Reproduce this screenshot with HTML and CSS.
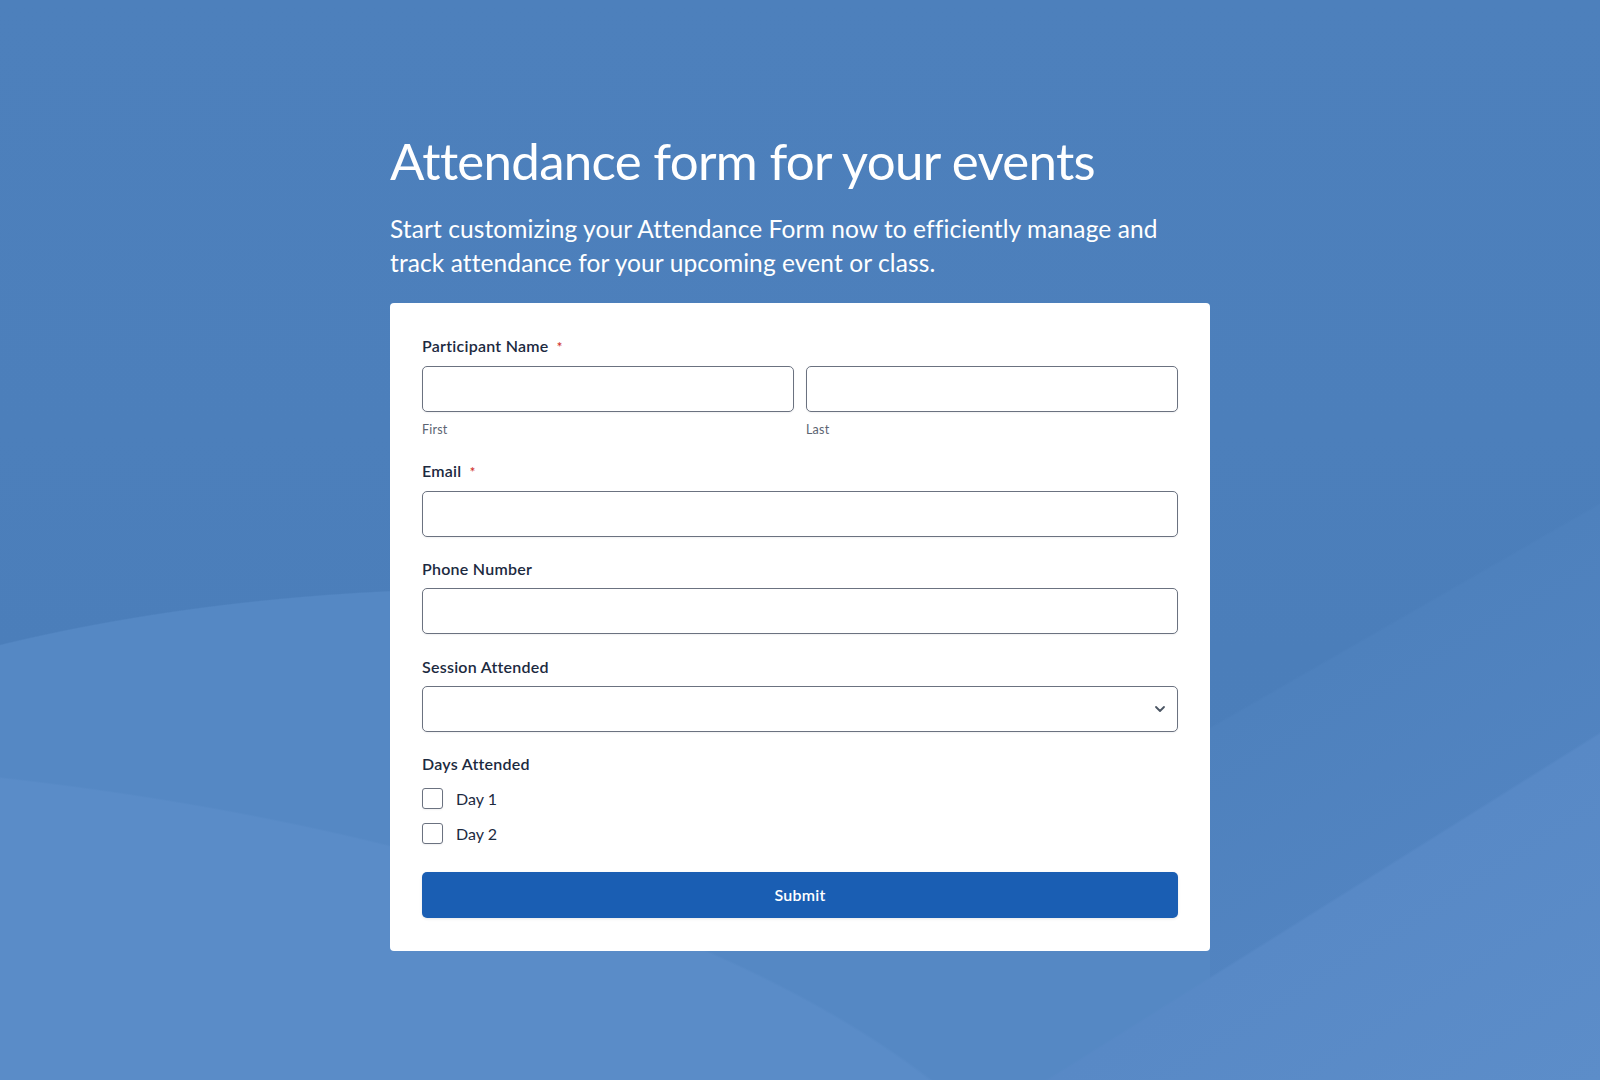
FILE: index.html
```html
<!DOCTYPE html>
<html lang="en">
<head>
<meta charset="utf-8">
<title>Attendance form for your events</title>
<link rel="stylesheet" href="styles.css">
</head>
<body>
<main class="page">
  <header class="intro">
    <h1 class="title">Attendance form for your events</h1>
    <p class="subtitle">Start customizing your Attendance Form now to efficiently manage and track attendance for your upcoming event or class.</p>
  </header>
  <section class="card">
    <form class="form">
      <div class="field">
        <label class="label">Participant Name <span class="req">*</span></label>
        <div class="name-row">
          <div class="sub">
            <input class="input" type="text">
            <span class="hint">First</span>
          </div>
          <div class="sub">
            <input class="input" type="text">
            <span class="hint">Last</span>
          </div>
        </div>
      </div>
      <div class="field">
        <label class="label">Email <span class="req">*</span></label>
        <input class="input" type="email">
      </div>
      <div class="field">
        <label class="label">Phone Number</label>
        <input class="input" type="tel">
      </div>
      <div class="field">
        <label class="label">Session Attended</label>
        <div class="select-wrap">
          <select class="input select"><option></option></select>
          <svg class="chevron" width="12" height="8" viewBox="0 0 12 8"><path d="M2 2l4 4 4-4" fill="none" stroke="#4b5563" stroke-width="1.8" stroke-linecap="round" stroke-linejoin="round"/></svg>
        </div>
      </div>
      <div class="field">
        <span class="label days">Days Attended</span>
        <div class="options">
          <label class="option"><input class="check" type="checkbox"><span>Day 1</span></label>
          <label class="option"><input class="check" type="checkbox"><span>Day 2</span></label>
        </div>
      </div>
      <button class="submit" type="button">Submit</button>
    </form>
  </section>
</main>
</body>
</html>
```

FILE: styles.css
```css
html, body {
  margin: 0;
  padding: 0;
}
body {
  min-height: 1080px;
  font-family: Lato, "Noto Sans", sans-serif;
  background-color: #4c7fbb;
  background-image:
    linear-gradient(147.9deg, rgba(88,137,198,0) 83.2%, #5889c6 83.35%, #5c8dc9 100%),
    radial-gradient(ellipse 1500px 600px at -400px 1355px, #5a8cc8 99.7%, rgba(90,140,200,0) 100%),
    radial-gradient(ellipse 1000px 420px at 500px 1008px, #5588c4 99.7%, rgba(85,136,196,0) 100%),
    linear-gradient(150.1deg, rgba(78,129,190,0) 71.05%, #4e81bd 71.2%, #5284c1 85%),
    linear-gradient(180deg, #4d80bc 0%, #4c7fbb 40%, #4b7eba 60%, #4c7fbb 100%);
  background-size: 100% 100%, 1210px 1080px, 1210px 1080px, 100% 100%, 100% 100%;
  background-position: 0 0;
  background-repeat: no-repeat;
}
.page {
  width: 820px;
  margin: 0 auto;
  padding: 129px 0 131px;
  box-sizing: border-box;
}
.intro {
  color: #ffffff;
}
.title {
  margin: 0;
  font-size: 51px;
  line-height: 64px;
  font-weight: 400;
  letter-spacing: -0.7px;
}
.subtitle {
  max-width: 790px;
  margin: 19px 0 0;
  font-size: 24.5px;
  line-height: 34px;
  font-weight: 400;
  letter-spacing: 0.1px;
}
.card {
  margin-top: 23px;
  background: #ffffff;
  border-radius: 4px;
  padding: 33px 32px 33px;
}
.form {
  display: flex;
  flex-direction: column;
  gap: 22.5px;
}
.field {
  display: flex;
  flex-direction: column;
}
.label {
  font-size: 16px;
  line-height: 20px;
  font-weight: 600;
  letter-spacing: 0.25px;
  color: #1c2a3f;
  margin-bottom: 9px;
}
.req {
  color: #d0342c;
  font-size: 13px;
  margin-left: 4px;
  vertical-align: 0;
}
.name-row {
  display: grid;
  grid-template-columns: 1fr 1fr;
  gap: 12px;
}
.sub {
  display: flex;
  flex-direction: column;
}
.hint {
  margin-top: 10px;
  font-size: 12.5px;
  line-height: 16px;
  letter-spacing: 0.2px;
  color: #5b6472;
}
.input {
  display: block;
  width: 100%;
  height: 46px;
  box-sizing: border-box;
  border: 1px solid #6b7280;
  border-radius: 5px;
  background: #ffffff;
  box-shadow: 0 1px 2px rgba(16, 24, 40, 0.06);
  font-family: inherit;
  font-size: 16px;
  margin: 0;
  padding: 0 12px;
}
.select-wrap {
  position: relative;
}
.select {
  appearance: none;
  -webkit-appearance: none;
}
.chevron {
  position: absolute;
  right: 12px;
  top: 19px;
  pointer-events: none;
}
.days {
  margin-bottom: 14px;
}
.options {
  display: flex;
  flex-direction: column;
  gap: 15px;
}
.option {
  display: flex;
  align-items: center;
  gap: 13px;
  height: 20px;
  font-size: 16px;
  color: #1c2a3f;
}
.check {
  appearance: none;
  -webkit-appearance: none;
  width: 21px;
  height: 21px;
  margin: 0;
  border: 1px solid #6b7280;
  border-radius: 3px;
  background: #ffffff;
  box-shadow: 0 1px 2px rgba(16, 24, 40, 0.06);
  flex: none;
}
.submit {
  margin-top: 6px;
  height: 46px;
  width: 100%;
  border: none;
  border-radius: 5px;
  background: #1a5eb3;
  color: #ffffff;
  font-family: inherit;
  font-size: 16px;
  font-weight: 600;
  letter-spacing: 0.2px;
  box-shadow: 0 1px 3px rgba(16, 24, 40, 0.1);
  cursor: pointer;
}
```
